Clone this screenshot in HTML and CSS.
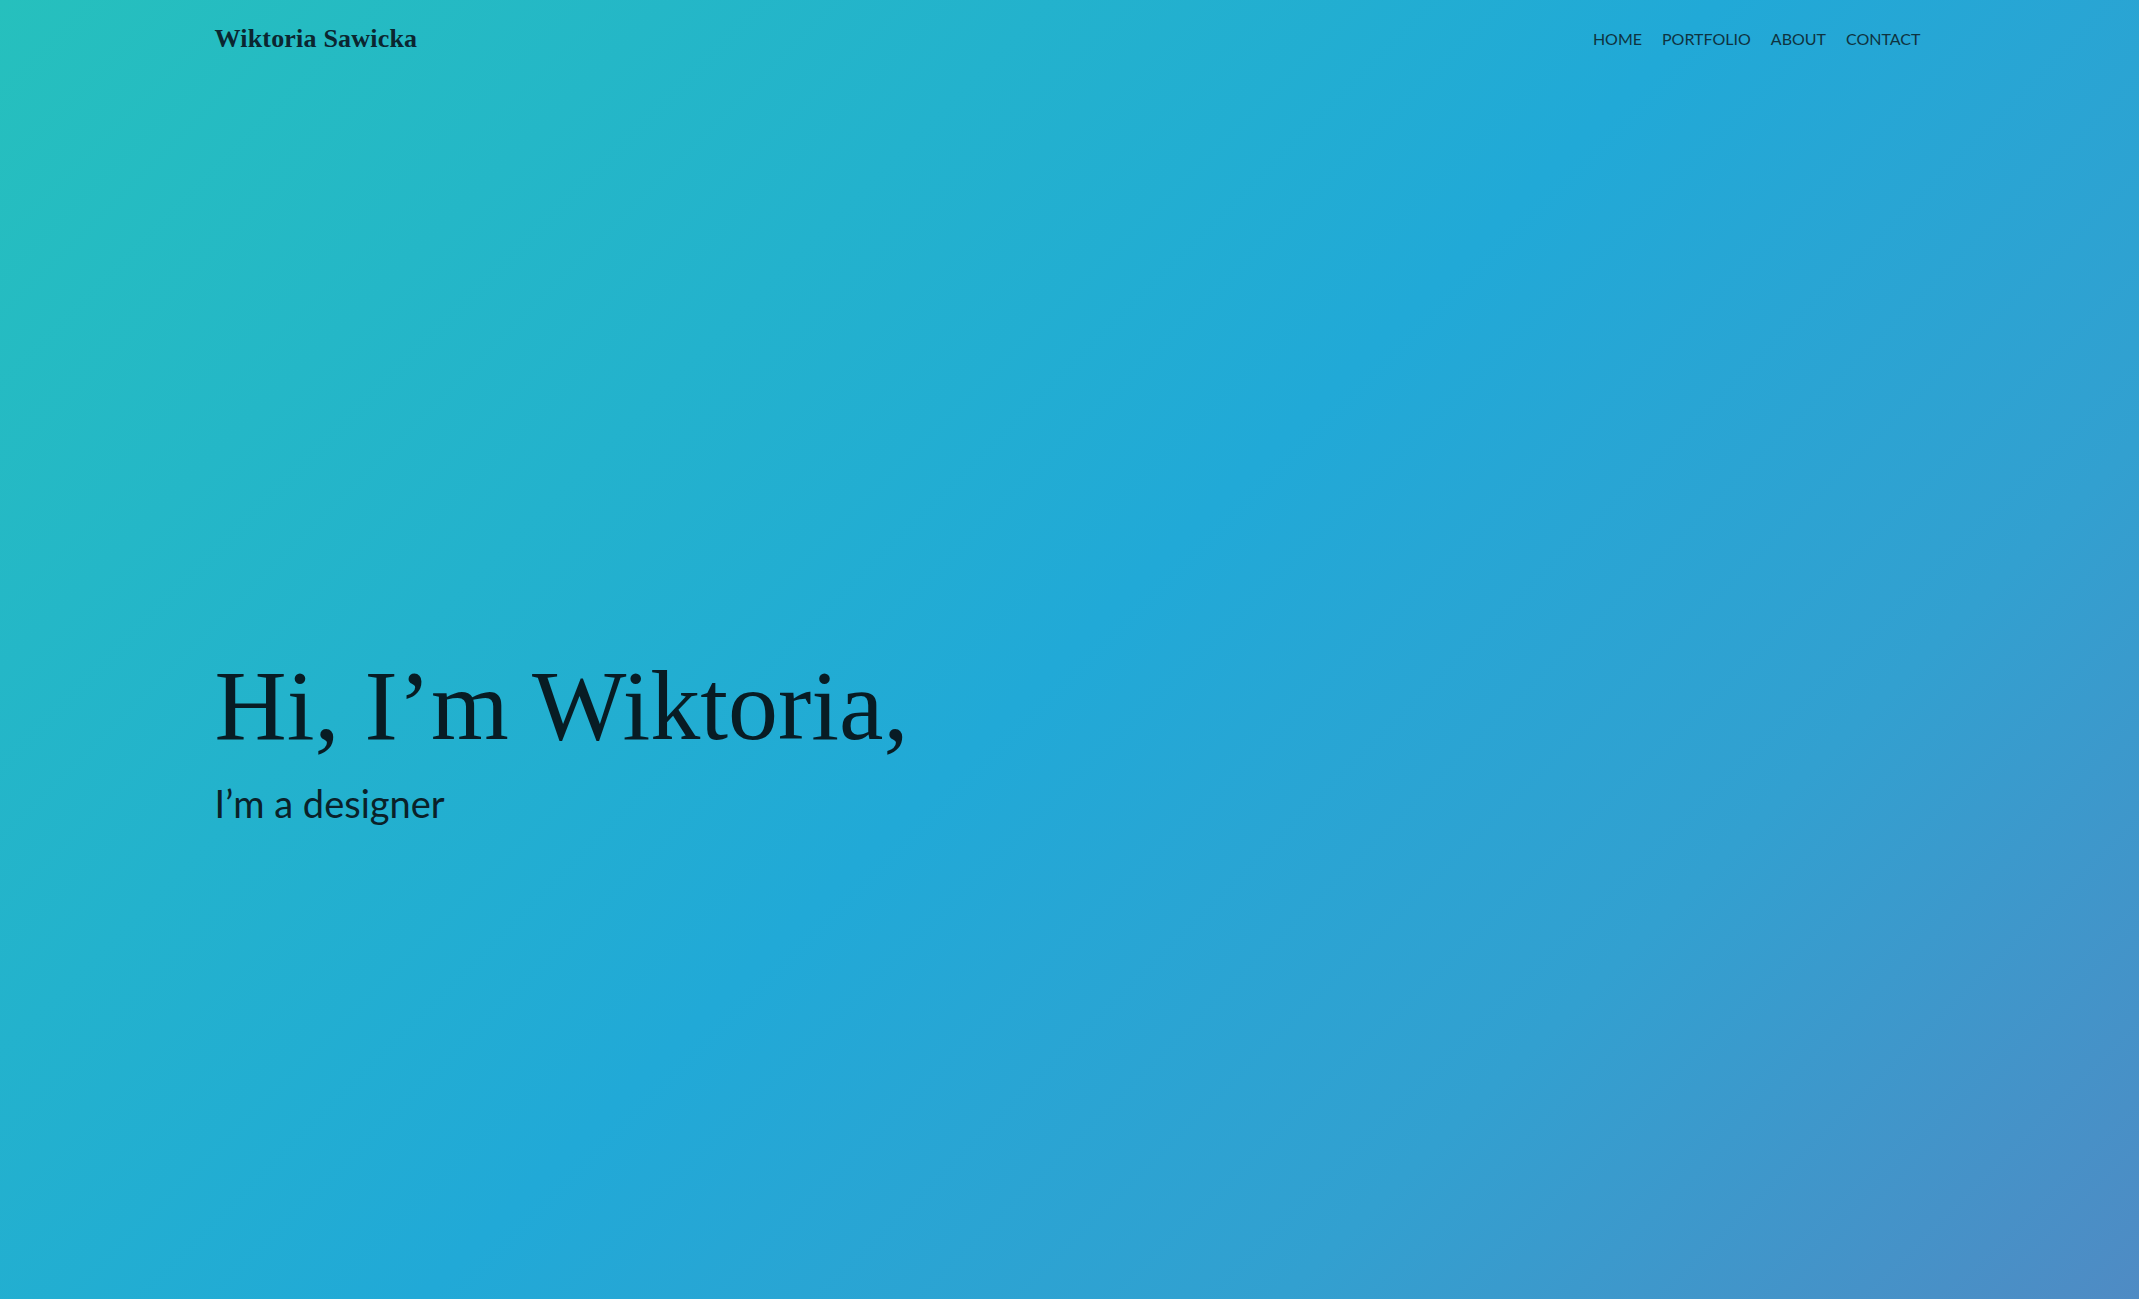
FILE: index.html
```html
<!DOCTYPE html>
<html lang="en">
<head>
<meta charset="utf-8">
<title>Wiktoria Sawicka</title>
<link rel="stylesheet" href="styles.css">
</head>
<body>
<div class="page">
  <header class="site-header">
    <a class="logo" href="#">Wiktoria Sawicka</a>
    <nav class="nav">
      <a href="#">HOME</a>
      <a href="#">PORTFOLIO</a>
      <a href="#">ABOUT</a>
      <a href="#">CONTACT</a>
    </nav>
  </header>
  <main class="hero">
    <h1 class="hero-title">Hi, I’m Wiktoria,</h1>
    <p class="hero-sub">I’m a designer</p>
  </main>
</div>
</body>
</html>
```

FILE: styles.css
```css
* { box-sizing: border-box; }
html, body { margin: 0; padding: 0; }
body {
  min-height: 100vh;
  background: linear-gradient(135deg, #26c0bd 0%, #21a9d7 50%, #32a0d0 75%, #4f8bc4 100%);
  color: #0a2129;
  font-family: "Lato", "Liberation Sans", sans-serif;
}
.page {
  width: 1710px;
  margin: 0 auto;
  min-height: 100vh;
  display: flex;
  flex-direction: column;
}
.site-header {
  display: flex;
  justify-content: space-between;
  align-items: center;
  padding: 24px 0;
}
.logo {
  font-family: "Liberation Serif", serif;
  font-weight: 700;
  font-size: 26px;
  color: #0b2630;
  text-decoration: none;
  letter-spacing: 0.2px;
}
.nav {
  display: flex;
  gap: 20px;
  margin-top: -2px;
  padding-right: 4px;
}
.nav a {
  font-size: 16px;
  color: #0f3340;
  text-decoration: none;
}
.hero {
  padding-top: 570px;
}
.hero-title {
  margin: 0;
  font-family: "Liberation Serif", serif;
  font-weight: 400;
  font-size: 100px;
  line-height: 1.15;
  color: #081c24;
}
.hero-sub {
  margin: 18px 0 0;
  font-size: 38px;
  line-height: 1.2;
  color: #0a2129;
}
```
